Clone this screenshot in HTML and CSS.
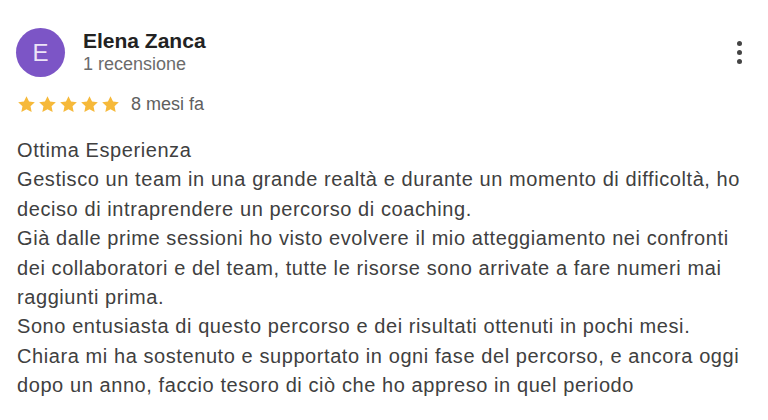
FILE: index.html
```html
<!DOCTYPE html>
<html lang="it">
<head>
<meta charset="utf-8">
<title>Recensione</title>
<link rel="stylesheet" href="styles.css">
</head>
<body>
<div class="review">
  <div class="header">
    <div class="avatar">E</div>
    <div class="meta">
      <div class="name">Elena Zanca</div>
      <div class="count">1 recensione</div>
    </div>
    <div class="more" aria-label="Altre opzioni">
      <span class="dot"></span><span class="dot"></span><span class="dot"></span>
    </div>
  </div>
  <div class="rating">
    <div class="stars">
      <svg class="star" viewBox="0 0 24 24"><path d="M12 2.5l2.9 6.1 6.6.8-4.9 4.6 1.3 6.6L12 17.3l-5.9 3.3 1.3-6.6-4.9-4.6 6.6-.8z"/></svg>
      <svg class="star" viewBox="0 0 24 24"><path d="M12 2.5l2.9 6.1 6.6.8-4.9 4.6 1.3 6.6L12 17.3l-5.9 3.3 1.3-6.6-4.9-4.6 6.6-.8z"/></svg>
      <svg class="star" viewBox="0 0 24 24"><path d="M12 2.5l2.9 6.1 6.6.8-4.9 4.6 1.3 6.6L12 17.3l-5.9 3.3 1.3-6.6-4.9-4.6 6.6-.8z"/></svg>
      <svg class="star" viewBox="0 0 24 24"><path d="M12 2.5l2.9 6.1 6.6.8-4.9 4.6 1.3 6.6L12 17.3l-5.9 3.3 1.3-6.6-4.9-4.6 6.6-.8z"/></svg>
      <svg class="star" viewBox="0 0 24 24"><path d="M12 2.5l2.9 6.1 6.6.8-4.9 4.6 1.3 6.6L12 17.3l-5.9 3.3 1.3-6.6-4.9-4.6 6.6-.8z"/></svg>
    </div>
    <span class="date">8 mesi fa</span>
  </div>
  <div class="text">
    <p>Ottima Esperienza</p>
    <p>Gestisco un team in una grande realtà e durante un momento di difficoltà, ho deciso di intraprendere un percorso di coaching.</p>
    <p>Già dalle prime sessioni ho visto evolvere il mio atteggiamento nei confronti dei collaboratori e del team, tutte le risorse sono arrivate a fare numeri mai raggiunti prima.</p>
    <p>Sono entusiasta di questo percorso e dei risultati ottenuti in pochi mesi.</p>
    <p>Chiara mi ha sostenuto e supportato in ogni fase del percorso, e ancora oggi dopo un anno, faccio tesoro di ciò che ho appreso in quel periodo</p>
  </div>
</div>
</body>
</html>
```
FILE: styles.css
```css
html, body {
  margin: 0;
  padding: 0;
  background: #ffffff;
}

body {
  font-family: "Liberation Sans", Arial, sans-serif;
}

.review {
  padding: 28px 0 0 16px;
  width: 740px;
}

.header {
  display: flex;
  align-items: flex-start;
}

.avatar {
  width: 49px;
  height: 49px;
  border-radius: 50%;
  background: #7c55c6;
  color: #ece4f7;
  font-size: 24px;
  display: flex;
  align-items: center;
  justify-content: center;
  flex: none;
}

.meta {
  margin-left: 18px;
  padding-top: 1px;
}

.name {
  font-size: 21px;
  font-weight: bold;
  color: #222222;
  line-height: 24px;
}

.count {
  font-size: 18px;
  color: #6b6b6b;
  line-height: 22px;
}

.more {
  margin-left: auto;
  margin-right: 13px;
  padding-top: 13px;
  display: flex;
  flex-direction: column;
  gap: 4px;
  width: 8px;
  align-items: center;
}

.dot {
  width: 5px;
  height: 5px;
  border-radius: 50%;
  background: #444444;
}

.rating {
  display: flex;
  align-items: center;
  margin-top: 16px;
  height: 22px;
}

.stars {
  display: flex;
  gap: 0;
}

.star {
  width: 21px;
  height: 21px;
  fill: #f6b93a;
}

.date {
  font-size: 18px;
  color: #5f5f5f;
  margin-left: 10px;
}

.text {
  margin-top: 21px;
  margin-left: 1px;
  width: 732px;
  font-size: 20px;
  line-height: 29.4px;
  letter-spacing: 0.58px;
  color: #404040;
}

.text p {
  margin: 0;
}
```
